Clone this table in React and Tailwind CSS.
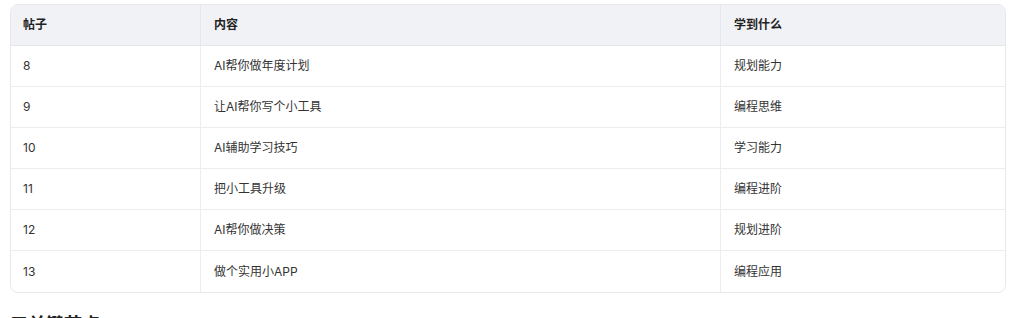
import React from "react";

const rows = [
  ["8", "AI帮你做年度计划", "规划能力"],
  ["9", "让AI帮你写个小工具", "编程思维"],
  ["10", "AI辅助学习技巧", "学习能力"],
  ["11", "把小工具升级", "编程进阶"],
  ["12", "AI帮你做决策", "规划进阶"],
  ["13", "做个实用小APP", "编程应用"],
];

export default function App() {
  return (
    <div
      className="bg-white w-[1022px] h-[318px] overflow-hidden pl-[10px] pt-[4px] text-[12px] text-[#333]"
      style={{ fontFamily: 'Inter, "Noto Sans CJK SC", sans-serif' }}
    >
      <div className="w-[996px] border border-[#e8e8ec] rounded-[8px] overflow-hidden">
        <div className="grid grid-cols-[190px_520px_1fr] bg-[#f1f2f6] h-[41px] font-bold text-[#222] border-b border-[#e6e6ea]">
          <div className="flex items-center px-[12px] border-r border-[#e6e6ea]">帖子</div>
          <div className="flex items-center px-[13px] border-r border-[#e6e6ea]">内容</div>
          <div className="flex items-center px-[13px]">学到什么</div>
        </div>
        {rows.map((r, i) => (
          <div
            key={i}
            className={
              "grid grid-cols-[190px_520px_1fr] h-[41px] " +
              (i < rows.length - 1 ? "border-b border-[#ededf0]" : "")
            }
          >
            <div className="flex items-center px-[12px] border-r border-[#ededf0]">{r[0]}</div>
            <div className="flex items-center px-[13px] border-r border-[#ededf0]">{r[1]}</div>
            <div className="flex items-center px-[13px]">{r[2]}</div>
          </div>
        ))}
      </div>
      <h3 className="mt-[18px] text-[18px] font-bold text-[#222] leading-[28px]">三关键节点</h3>
    </div>
  );
}
